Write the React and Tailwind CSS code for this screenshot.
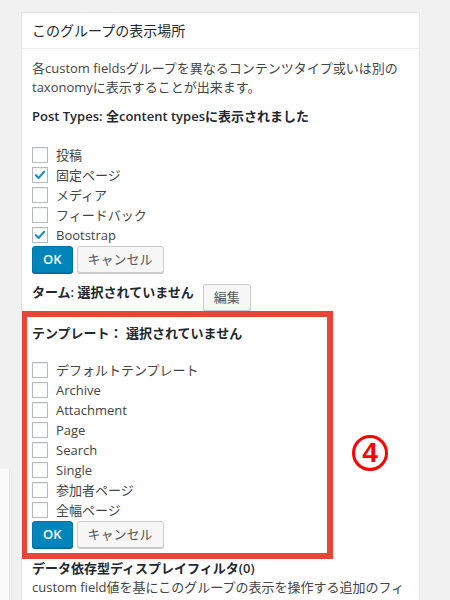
import React from 'react';

const POST_TYPES = [
    { label: '投稿', checked: false },
    { label: '固定ページ', checked: true },
    { label: 'メディア', checked: false },
    { label: 'フィードバック', checked: false },
    { label: 'Bootstrap', checked: true },
];

const TEMPLATES = [
    'デフォルトテンプレート',
    'Archive',
    'Attachment',
    'Page',
    'Search',
    'Single',
    '参加者ページ',
    '全幅ページ',
];

function Checkbox({ checked }) {
    return (
        <span className="w-[16px] h-[16px] shrink-0 bg-white border border-[#b4b9be] shadow-[inset_0_1px_2px_rgba(0,0,0,0.07)] flex items-center justify-center">
            {checked && (
                <svg width="16" height="16" viewBox="0 0 16 16">
                    <polyline points="3.2,8.2 6.4,11.4 12.8,4.2" fill="none" stroke="#1e8cbe" strokeWidth="2.4" strokeLinecap="round" strokeLinejoin="round" />
                </svg>
            )}
        </span>
    );
}

function CheckRow({ label, checked }) {
    return (
        <label className="h-[20px] flex items-center gap-[8px]">
            <Checkbox checked={checked} />
            <span>{label}</span>
        </label>
    );
}

function Buttons() {
    return (
        <div className="mt-[1px] flex gap-[4px]">
            <button className="h-[27px] px-[10px] rounded-[3px] bg-[#0085ba] border border-[#0073aa] shadow-[0_1px_0_#006799] text-white font-semibold">
                OK
            </button>
            <button className="h-[27px] px-[10px] rounded-[3px] bg-[#f7f7f7] border border-[#cccccc] shadow-[0_1px_0_#cccccc] text-[#555]">
                キャンセル
            </button>
        </div>
    );
}

export default function App() {
    return (
        <div className="h-[600px] overflow-hidden bg-[#f1f1f1] flex font-['Open_Sans','Noto_Sans_CJK_JP',sans-serif]">
            {/* edge of the neighbouring box */}
            <div className="w-[10px] pt-[469px] flex flex-col">
                <div className="flex-1 bg-[#fbfbfb] border-r border-[#e5e5e5]" />
            </div>

            <div className="ml-[11px] mt-[12px] w-[399px] h-[700px] bg-white border border-[#e5e5e5] overflow-hidden">
                <div className="px-[10px] py-[8px] text-[14px] leading-[19px] text-[#23282d] border-b border-[#eeeeee]">
                    このグループの表示場所
                </div>

                <div className="px-[10px] pt-[10px] text-[13px] leading-[19px] text-[#444]">
                    <p className="whitespace-nowrap">
                        各custom fieldsグループを異なるコンテンツタイプ或いは別の
                        <br />
                        taxonomyに表示することが出来ます。
                    </p>
                    <p className="mt-[10px] font-semibold text-[#23282d]">
                        Post Types: 全content typesに表示されました
                    </p>

                    <div className="mt-[19px]">
                        {POST_TYPES.map((t) => (
                            <CheckRow key={t.label} label={t.label} checked={t.checked} />
                        ))}
                    </div>
                    <Buttons />

                    <div className="mt-[10px] flex items-start">
                        <span className="font-semibold text-[#23282d]">ターム: 選択されていません</span>
                        <button className="ml-[9px] mt-[1px] h-[27px] px-[10px] rounded-[3px] bg-[#f7f7f7] border border-[#cccccc] shadow-[0_1px_0_#cccccc] text-[#555]">
                            編集
                        </button>
                    </div>

                    <div className="flex items-start">
                        <div className="ml-[-11px] w-[312px] shrink-0 border-[6px] border-[#e8443a] pl-[5px] pt-[7px] pb-[5px]">
                            <p className="font-semibold text-[#23282d]">テンプレート： 選択されていません</p>
                            <div className="mt-[17px]">
                                {TEMPLATES.map((t) => (
                                    <CheckRow key={t} label={t} checked={false} />
                                ))}
                            </div>
                            <Buttons />
                        </div>
                        <div className="ml-[19px] mt-[124px] w-[36px] h-[36px] rounded-full border-[3px] border-[#ff0000] flex items-center justify-center text-[#ff0000] text-[28px] font-bold leading-none font-['Liberation_Sans',sans-serif]">
                            4
                        </div>
                    </div>

                    <p className="font-semibold text-[#23282d]">データ依存型ディスプレイフィルタ(0)</p>
                    <p className="whitespace-nowrap">
                        custom field値を基にこのグループの表示を操作する追加のフィ
                        <br />
                        ルタを設定することが出来ます。
                    </p>
                </div>
            </div>
        </div>
    );
}
